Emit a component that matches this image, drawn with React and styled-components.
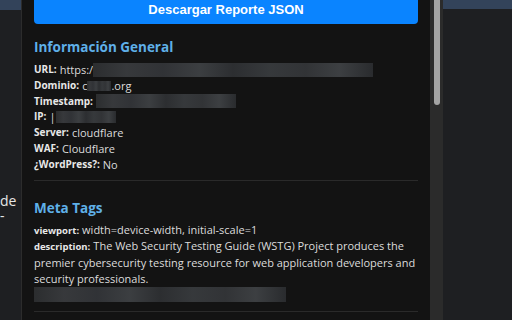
import React from "react";
import styled, { createGlobalStyle } from "styled-components";

const Global = createGlobalStyle`
  html, body { margin: 0; padding: 0; background: #1e1f22; }
  body { width: 512px; height: 320px; overflow: hidden; font-family: "Open Sans", "Noto Sans", sans-serif; }
`;

const Page = styled.div`
  display: flex;
  width: 512px;
  height: 320px;
  overflow: hidden;
`;

const SideStrip = styled.div`
  width: ${(p) => p.$w}px;
  flex: ${(p) => (p.$grow ? 1 : "none")};
  background: #1e1f22;
  display: flex;
  flex-direction: column;
  overflow: hidden;
`;

const TopBar = styled.div`
  height: ${(p) => p.$h}px;
  background: #33435a;
  flex: none;
`;

const CutText = styled.div`
  margin-top: ${(p) => p.$top}px;
  font-family: "Open Sans", sans-serif;
  font-size: 14px;
  line-height: 14px;
  color: #e6e6e6;
  white-space: nowrap;
`;

const Rule = styled.div`
  width: 1px;
  background: #2c2c2c;
  flex: none;
`;

const Panel = styled.div`
  width: 408px;
  flex: none;
  background: #131313;
  overflow: hidden;
`;

const Content = styled.div`
  padding: 0 12px;
  display: flex;
  flex-direction: column;
`;

const Button = styled.div`
  margin-top: -6px;
  height: 30px;
  background: #0a84ff;
  border-radius: 4px;
  color: #fff;
  font-family: "Liberation Sans", Arial, sans-serif;
  font-weight: 700;
  font-size: 13px;
  display: flex;
  align-items: center;
  justify-content: center;
`;

const Section = styled.div`
  display: flex;
  flex-direction: column;
  padding-top: ${(p) => p.$pt}px;
  padding-bottom: ${(p) => p.$pb}px;
  border-bottom: 1px solid #2a2a2a;
`;

const Heading = styled.div`
  color: #5fb0e8;
  font-family: "Open Sans", sans-serif;
  font-weight: 700;
  font-size: 13.5px;
  line-height: 20px;
  margin-bottom: ${(p) => p.$mb}px;
`;

const Line = styled.div`
  color: #dcdcdc;
  font-size: 11px;
  line-height: 15.8px;
  height: 15.8px;
  white-space: nowrap;
  display: flex;
  align-items: center;
`;

const Para = styled.div`
  color: #dcdcdc;
  font-size: 11px;
  line-height: 15.8px;
`;

const Label = styled.b`
  color: #e8e8e8;
  font-weight: 700;
  font-size: ${(p) => p.$size || 10}px;
  margin-right: 3px;
`;

const Blur = styled.span`
  display: inline-block;
  height: ${(p) => p.$h || 14}px;
  width: ${(p) => p.$w}px;
  background: linear-gradient(
      90deg,
      #2e3032 0%, #3b3d40 12%, #34363a 25%, #404346 38%, #2f3134 50%,
      #3a3d40 63%, #35373a 76%, #414447 88%, #2c2e31 100%
    );
  opacity: 0.9;
`;

const Track = styled.div`
  width: 13px;
  flex: none;
  background: #2b2b2b;
  display: flex;
  justify-content: center;
`;

const Thumb = styled.div`
  width: 6px;
  height: 105px;
  background: #a3a3a3;
  border-radius: 0 0 3px 3px;
`;

export default function App() {
  return (
    <>
      <Global />
      <Page>
        <SideStrip $w={21}>
          <TopBar $h={10} />
          <CutText $top={184}>de</CutText>
          <CutText $top={1}>-</CutText>
        </SideStrip>
        <Rule />
        <Panel>
          <Content>
            <Button>Descargar Reporte JSON</Button>
            <Section $pt={13} $pb={7}>
              <Heading $mb={5}>Información General</Heading>
              <Line><Label>URL:</Label>https:/<Blur $w={280} /></Line>
              <Line><Label>Dominio:</Label>c<Blur $w={24} $h={10} />.org</Line>
              <Line><Label>Timestamp:</Label><Blur $w={140} /></Line>
              <Line><Label>IP:</Label>|<Blur $w={60} $h={12} /></Line>
              <Line><Label>Server:</Label>cloudflare</Line>
              <Line><Label>WAF:</Label>Cloudflare</Line>
              <Line><Label>¿WordPress?:</Label>No</Line>
            </Section>
            <Section $pt={17} $pb={8}>
              <Heading $mb={4}>Meta Tags</Heading>
              <Para><Label $size={9.5}>viewport:</Label>width=device-width, initial-scale=1</Para>
              <Para><Label $size={9.5}>description:</Label>The Web Security Testing Guide (WSTG) Project produces the premier cybersecurity testing resource for web application developers and security professionals.</Para>
              <Line><Blur $w={252} $h={15} /></Line>
            </Section>
          </Content>
        </Panel>
        <Track><Thumb /></Track>
        <SideStrip $grow>
          <TopBar $h={9} />
        </SideStrip>
      </Page>
    </>
  );
}
